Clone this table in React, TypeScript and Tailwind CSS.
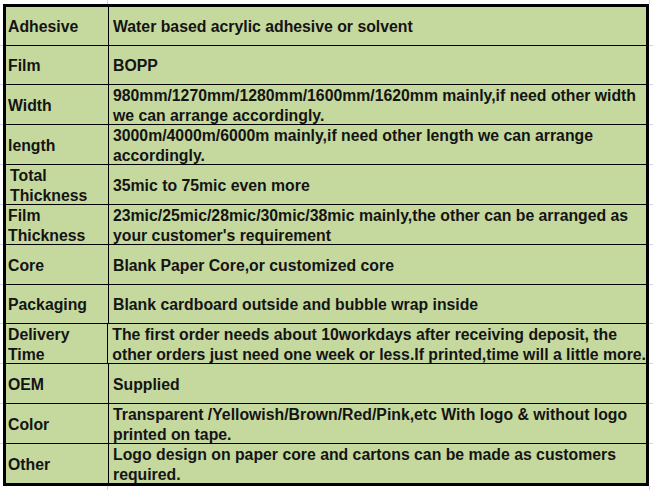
import React from "react";

type Row = {
  label: string[];
  value: string[];
  indent?: boolean;
};

const rows: Row[] = [
  { label: ["Adhesive"], value: ["Water based acrylic adhesive or solvent"] },
  { label: ["Film"], value: ["BOPP"] },
  {
    label: ["Width"],
    value: [
      "980mm/1270mm/1280mm/1600mm/1620mm mainly,if need other width",
      "we can arrange accordingly.",
    ],
  },
  {
    label: ["length"],
    value: [
      "3000m/4000m/6000m mainly,if need other length we can arrange",
      "accordingly.",
    ],
  },
  { label: ["Total", "Thickness"], value: ["35mic to 75mic even more"], indent: true },
  {
    label: ["Film", "Thickness"],
    value: [
      "23mic/25mic/28mic/30mic/38mic mainly,the other can be arranged as",
      "your customer's requirement",
    ],
  },
  { label: ["Core"], value: ["Blank Paper Core,or customized core"] },
  { label: ["Packaging"], value: ["Blank cardboard outside and bubble wrap inside"] },
  {
    label: ["Delivery", "Time"],
    value: [
      "The first order needs about 10workdays after receiving deposit, the",
      "other orders just need one week or less.If printed,time will a little more.",
    ],
  },
  { label: ["OEM"], value: ["Supplied"] },
  {
    label: ["Color"],
    value: [
      "Transparent /Yellowish/Brown/Red/Pink,etc With logo & without logo",
      "printed on tape.",
    ],
  },
  {
    label: ["Other"],
    value: [
      "Logo design on paper core and cartons can be made as customers",
      "required.",
    ],
  },
];

const Lines = ({ lines, className }: { lines: string[]; className?: string }) => (
  <div className={`flex flex-col whitespace-nowrap ${lines.length > 1 ? "pt-[3px]" : "pt-[2px]"} ${className ?? ""}`}>
    {lines.map((l, i) => (
      <span key={i} className="block leading-[20px]">
        {l}
      </span>
    ))}
  </div>
);

const GridStrip = ({ h }: { h: string }) => (
  <div className={`flex ${h}`}>
    <div className="w-[108px] border-r border-[#d0d7e5]" />
    <div className="w-[542px] border-r border-[#d0d7e5]" />
  </div>
);

const App = () => {
  return (
    <div className="w-[653px] h-[490px] bg-white overflow-hidden flex flex-col font-['Liberation_Sans',Arial,sans-serif] font-bold text-[15.8px] text-[#141414]">
      <GridStrip h="h-[4px]" />
      <div className="flex h-[3px]">
        <div className="w-[3px]" />
        <div className="w-[646px] bg-black" />
      </div>
      {rows.map((row, i) => {
        const first = i === 0;
        const last = i === rows.length - 1;
        const h = first ? "h-[39px]" : last ? "h-[39px]" : "h-[40px]";
        return (
          <div key={i} className={`flex ${h}`}>
            <div className={`w-[3px] ${last ? "" : "border-b border-[#d0d7e5]"}`} />
            <div
              className={`flex w-[646px] bg-[#c5d89d] border-x-[3px] border-black ${last ? "" : "border-b border-b-black"}`}
            >
              <div className="w-[103px] border-r border-black flex items-center pl-[2px]">
                <Lines lines={row.label} className={row.indent ? "pl-[2px]" : ""} />
              </div>
              <div className="flex-1 flex items-center pl-[4px] overflow-visible">
                <Lines lines={row.value} />
              </div>
            </div>
            <div className={`w-[4px] ${last ? "" : "border-b border-[#d0d7e5]"}`} />
          </div>
        );
      })}
      <div className="flex h-[3px]">
        <div className="w-[3px]" />
        <div className="w-[646px] bg-black" />
      </div>
      <GridStrip h="h-[4px]" />
    </div>
  );
};

export default App;
